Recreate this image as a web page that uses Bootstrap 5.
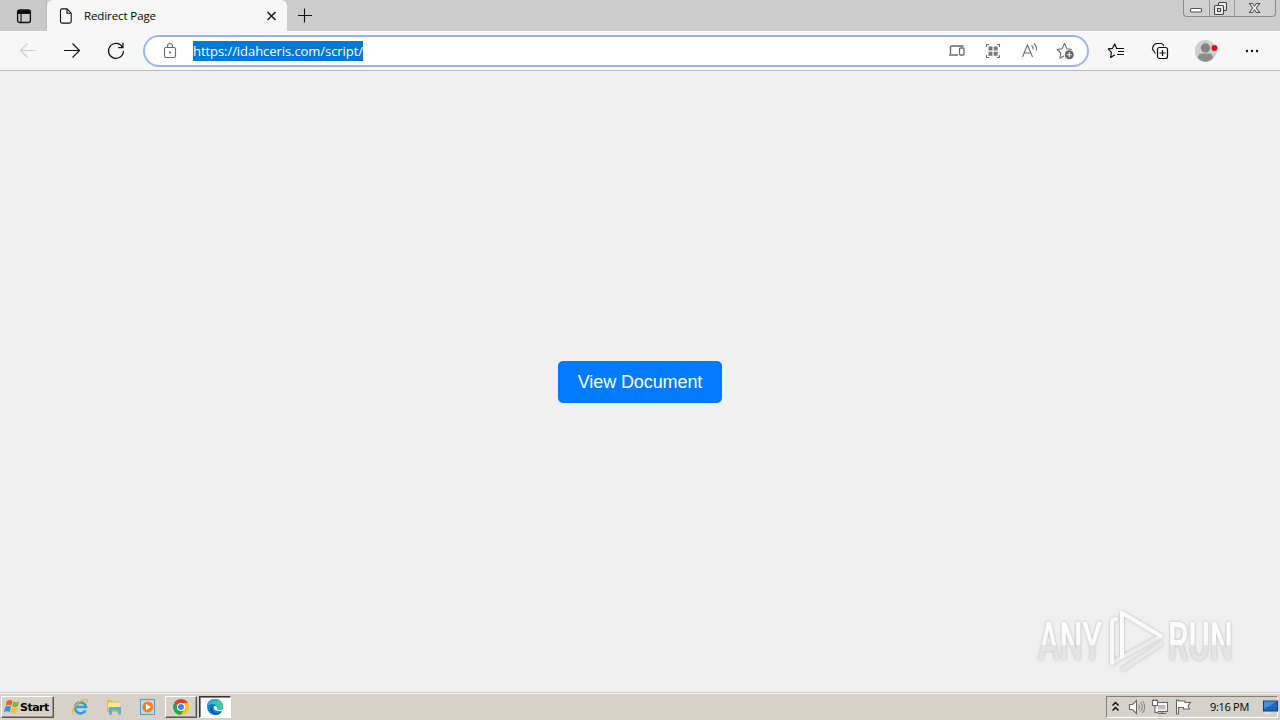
<!DOCTYPE html>
<html lang="en">
<head>
    <meta charset="UTF-8">
    <meta name="viewport" content="width=device-width, initial-scale=1.0">
    <title>Redirect Page</title>
    <link rel="stylesheet" href="https://cdn.jsdelivr.net/npm/bootstrap@5.3.0/dist/css/bootstrap.min.css">
    <style>
        body {
            height: 720px;
            background: #f0f0f0;
            font-family: "Open Sans", "Noto Sans", sans-serif;
            color: #000;
        }
        svg {
            display: block;
            flex: none;
            fill: none;
            stroke: #111;
            stroke-width: 1.1;
        }
        .tab-strip {
            height: 31px;
            background: #cdcdcd;
        }
        .tab-menu {
            width: 47px;
            background: #c9c9c9;
            border-bottom-right-radius: 4px;
            border-right: 1px solid #bdbdbd;
        }
        .page-tab {
            width: 240px;
            padding: 0 9px 0 12px;
            background: #f7f7f7;
            border-radius: 6px 6px 0 0;
        }
        .tab-title {
            font-size: 11.5px;
            letter-spacing: -.1px;
            margin-left: 11px;
        }
        .new-tab {
            padding-left: 11px;
        }
        .win-buttons {
            height: 17px;
            width: 93px;
            border: 1px solid #8b8b8b;
            border-top: 0;
            border-radius: 0 0 4px 4px;
            margin-right: 4px;
            background: #d0d0d0;
        }
        .win-buttons button {
            padding: 0;
            border: 0;
            background: none;
            height: 16px;
            width: 25px;
        }
        .win-buttons button:last-child {
            width: 41px;
        }
        .win-buttons button + button {
            border-left: 1px solid #999;
        }
        .toolbar {
            height: 40px;
            background: #f7f7f7;
            border-bottom: 1px solid #bcbcbc;
        }
        .nav-icons {
            padding: 0 18px 0 19px;
            gap: 26px;
        }
        .nav-icons .disabled-icon {
            stroke: #ccc;
        }
        .address {
            width: 946px;
            height: 32px;
            border: 2px solid #9ab6e2;
            border-radius: 16px;
            background: #fff;
            padding: 0 11px 0 16px;
        }
        .address svg {
            stroke: #6b6b6b;
        }
        .url {
            background: #0078d4;
            color: #fff;
            font-size: 13px;
            line-height: 20px;
            height: 20px;
            width: 170px;
            margin-left: 14px;
            letter-spacing: -.06px;
            white-space: nowrap;
        }
        .tool-icons {
            padding-left: 18px;
            gap: 26px;
        }
        .page-area {
            height: 621px;
            padding-top: 1px;
        }
        .btn-view {
            width: 164px;
            height: 42px;
            padding: 0;
            border: 0;
            border-radius: 5px;
            background: #007bff;
            color: #fff;
            font: 18px/42px "Liberation Sans", Arial, sans-serif;
            letter-spacing: -.1px;
        }
        .watermark {
            right: 0;
            bottom: 14px;
        }
        .taskbar {
            height: 28px;
            background: #d6d2ca;
            border-top: 1px solid #c9c6c0;
            box-shadow: inset 0 1px #fbfaf8;
            padding: 2px 2px 1px 1px;
        }
        .raised {
            border: 1px solid;
            border-color: #fff #55524c #55524c #fff;
            box-shadow: inset -1px -1px #9b978f;
            background: #d6d2ca;
        }
        .sunken {
            border: 1px solid;
            border-color: #333 #fff #fff #333;
            box-shadow: inset 1px 1px #888;
            background: #fff;
        }
        .start-btn {
            width: 53px;
            height: 22px;
            margin-right: 1px;
            padding: 0 2px;
            font: bold 11px "DejaVu Sans", sans-serif;
            letter-spacing: -.5px;
        }
        .task-btn {
            width: 32px;
            height: 22px;
        }
        .task-btn.sunken {
            margin-left: 2px;
        }
        .tray {
            width: 172px;
            height: 22px;
            border: 1px solid;
            border-color: #858178 #fff #fff #858178;
            padding-left: 5px;
        }
        .tray svg {
            stroke: #666;
        }
        .tray .tray-arrows {
            stroke: #111;
        }
        .clock {
            font-size: 11px;
            letter-spacing: -.3px;
            width: 42px;
            margin-left: 18px;
            white-space: nowrap;
        }
    </style>
</head>
<body class="d-flex flex-column overflow-hidden">

    <!-- Tabs -->
    <div class="tab-strip d-flex">
        <div class="tab-menu d-flex align-items-center ps-3">
            <svg width="16" height="16" viewBox="0 0 16 16"><rect x="1.600" y="2.100" width="12.800" height="12.400" rx="2" stroke-width="1.300"/><path d="M1.500 5.500V4q0-2 2-2h9q2 0 2 2v1.500z" fill="#111"/><path d="M5 5v9"/></svg>
        </div>
        <div class="page-tab d-flex align-items-center">
            <svg width="14" height="16" viewBox="0 0 14 16"><path d="M3 .9h5l4.200 4.300v8.400q0 1.500-1.500 1.500H3q-1.500 0-1.500-1.500V2.400Q1.500.9 3 .9zM8 1v4.200h4"/></svg>
            <span class="tab-title">Redirect Page</span>
            <svg class="ms-auto" width="13" height="13" viewBox="0 0 13 13"><path d="M2.500 3l8 8M10.500 3l-8 8" stroke-width="1.400"/></svg>
        </div>
        <div class="new-tab d-flex align-items-center">
            <svg width="16" height="16" viewBox="0 0 16 16"><path d="M0 7.500h14M6.500.5v14"/></svg>
        </div>
        <div class="win-buttons d-flex ms-auto">
            <button><svg width="24" height="16" viewBox="0 0 24 16"><rect x="6.500" y="8.500" width="11" height="3.500" rx="1" fill="#fff" stroke="#555"/></svg></button>
            <button><svg width="24" height="16" viewBox="0 0 24 16"><g fill="#eee" stroke="#444"><rect x="8.500" y="2.500" width="8" height="8" rx="1"/><rect x="4.500" y="5.500" width="9" height="9" rx="1"/><rect x="7.500" y="8.500" width="3" height="3"/></g></svg></button>
            <button><svg width="40" height="16" viewBox="0 0 40 16"><path d="M14.500 3.500h3l2 2.500 2-2.500h3l-3.300 4.500 3.300 4.500h-3l-2-2.500-2 2.500h-3L17.800 8z" fill="#fff" stroke="#555"/></svg></button>
        </div>
    </div>

    <!-- Toolbar -->
    <div class="toolbar d-flex align-items-center">
        <div class="nav-icons d-flex">
            <svg class="disabled-icon" width="18" height="18" viewBox="0 0 18 18"><path d="M16.500 8.500H1.500M8.500 1.500l-7 7 7 7"/></svg>
            <svg width="18" height="18" viewBox="0 0 18 18"><path d="M1 8.500h15.500M9.500 1.500l7 7-7 7" stroke-width="1.150"/></svg>
            <svg width="18" height="18" viewBox="0 0 18 18"><path d="M15.700 5.500A7.500 7.500 0 1 0 16.500 9M16 .8v4.900h-4.900" stroke-width="1.200"/></svg>
        </div>
        <div class="address d-flex align-items-center">
            <svg width="18" height="18" viewBox="0 0 18 18"><rect x="3.500" y="5.500" width="11" height="10" rx="1.500"/><path d="M6.500 5.500V4a2.500 2.500 0 0 1 5 0v1.500"/><circle cx="9" cy="10.500" r="1" fill="#555" stroke="none"/></svg>
            <div class="url">https://idahceris.com/script/</div>
            <div class="d-flex ms-auto align-items-center">
                <svg class="me-3" width="20" height="18" viewBox="0 0 20 18"><path d="M2.500 12V5q0-1 1-1H15.500M1 13h9" stroke-width="1.400"/><rect x="11.500" y="6" width="4.500" height="7" rx="1" stroke-width="1.300"/></svg>
                <svg class="me-3" width="20" height="18" viewBox="0 0 20 18"><path d="M2.500 5V2.500H5M13 2.500h2.500V5M15.500 13v2.500H13M5 15.500H2.500V13"/><path d="M4.500 4.500h4v4h-4zM9.700 4.500h4v4h-4zM4.500 9.700h4v4h-4zM9.700 9.700h4v4h-4z" fill="#777" stroke="none"/></svg>
                <svg class="me-3" width="20" height="18" viewBox="0 0 20 18"><path d="M2.500 15L7.500 3l5 12M4.200 11h6.600M11.500 3.500q2 1.600 1.700 4M13.800 1.500q3.400 2.700 2.500 7"/></svg>
                <svg width="20" height="20" viewBox="0 0 20 20"><path d="M8 15l-4 2 .8-5L1.200 8.500l4.900-.8L8.500 2.500l2.400 5.200 5 .8" stroke-linejoin="round"/><circle cx="13.300" cy="13.800" r="4.500" fill="#666" stroke="none"/><path d="M10.800 13.800h5M13.300 11.300v5" stroke="#fff"/></svg>
            </div>
        </div>
        <div class="tool-icons d-flex align-items-center">
            <svg width="18" height="18" viewBox="0 0 18 18"><path d="M10.800 6.500H9.700L7.700 1.900 5.500 6.300l-4.300.6 3.200 3.500-.8 5 4.300-2.600M10.800 6.500h6.200M11 9.500h6M10 12.500h7" stroke-width="1.200" stroke-linejoin="round"/></svg>
            <svg width="18" height="18" viewBox="0 0 18 18"><rect x="6.500" y="5.500" width="10" height="11" rx="2" stroke-width="1.200"/><path d="M11.500 8v6M8.500 11h6M4.500 11.500L2.300 8.500Q1 7 1.600 5.500L3 3q1-1.300 2.500-1.500h4.500q1.700 0 2.300 1.500l.4 1" stroke-width="1.200"/></svg>
            <svg width="24" height="24" viewBox="0 0 24 24"><g stroke="none"><circle cx="10.500" cy="12" r="11" fill="#cfcfcf"/><circle cx="10.500" cy="9" r="4.700" fill="#858585"/><path d="M3 19q0-4.500 4-4.500h7q4 0 4 4.500-7.500 7.500-15 0z" fill="#8c8c8c"/><circle cx="19.500" cy="9" r="3" fill="#e00b1c"/></g></svg>
            <svg width="16" height="16" viewBox="0 0 16 16"><g fill="#111" stroke="none"><circle cx="2" cy="8" r="1.200"/><circle cx="7" cy="8" r="1.200"/><circle cx="12" cy="8" r="1.200"/></g></svg>
        </div>
    </div>

    <!-- Page -->
    <div class="page-area position-relative d-flex justify-content-center align-items-center">
        <button class="btn btn-view">View Document</button>
        <div class="watermark position-absolute">
            <svg width="250" height="70" viewBox="0 0 250 70">
                <defs>
                    <linearGradient id="fade" x1="0" y1="0" x2="0" y2="1">
                        <stop offset="0" stop-color="#fff"/>
                        <stop offset=".54" stop-color="#fafafa"/>
                        <stop offset=".56" stop-color="#e2e2e2"/>
                        <stop offset="1" stop-color="#eaeaea"/>
                    </linearGradient>
                    <filter id="soft" x="-10%" y="-10%" width="120%" height="120%">
                        <feDropShadow dx="0" dy="0" stdDeviation="1.4" flood-color="#888" flood-opacity=".6"/>
                    </filter>
                </defs>
                <g filter="url(#soft)">
                    <g fill="url(#fade)" stroke="none" font-family="Roboto, sans-serif" font-size="53" font-weight="500">
                        <text x="8" y="52" textLength="64" lengthAdjust="spacingAndGlyphs">ANY</text>
                        <text x="138" y="52" textLength="65" lengthAdjust="spacingAndGlyphs">RUN</text>
                    </g>
                    <g stroke-width="4" stroke-linejoin="round" stroke-linecap="round">
                        <path d="M93 61l38-25" stroke="#e9e9e9"/>
                        <path d="M86 11q-4 0-4 4v40l49-27" stroke="#ececec"/>
                        <path d="M82 55V15q0-4 4-4" stroke="#f8f8f8"/>
                        <path d="M92 49V5l39 23" stroke="#fbfbfb"/>
                    </g>
                </g>
            </svg>
        </div>
    </div>

    <!-- Taskbar -->
    <div class="taskbar d-flex align-items-center">
        <div class="start-btn raised d-flex align-items-center">
            <svg width="16" height="16" viewBox="0 0 16 16"><g stroke="none"><path d="M3 2q3-2 5.500 0L7.300 7Q4.500 5 1.500 7z" fill="#e8602c"/><path d="M9.300 2.500q3 1.500 6 0L13.800 7.500q-3 1.500-5.700 0z" fill="#7db83a"/><path d="M1.300 8q3-2 5.700 0l-1.200 5Q3 11.500 0 13z" fill="#3d8fd1"/><path d="M7.800 8.500q3 1.600 5.800 0L12.200 13.500q-3 1.600-5.700 0z" fill="#f6c12c"/></g></svg>
            <span>Start</span>
        </div>
        <svg class="ms-3" width="18" height="18" viewBox="0 0 18 18"><path d="M14.500 12.300A5.500 5.500 0 1 1 15 9H5" stroke="#2d9fe0" stroke-width="2.600"/><path d="M2 16C-1 13 7 3 14 1.500q3-.3 2 3" stroke="#e6b63e" stroke-width="1.300"/></svg>
        <svg class="ms-3" width="18" height="18" viewBox="0 0 18 18"><g stroke="none"><path d="M2 2h5l1 1.500h7V14H2z" fill="#e0ba4c"/><path d="M3 4.500h12v6H3z" fill="#fbe793"/><path d="M4 9h12v7.500h-3v-4H7v4H4z" fill="#58aedb"/></g></svg>
        <svg class="ms-3" width="18" height="18" viewBox="0 0 18 18"><rect x="1.500" y="1.500" width="14" height="15" fill="#b9ddf4" stroke="#5a9cca"/><circle cx="8.800" cy="9" r="5.500" fill="#f58220" stroke="none"/><path d="M7 5.800v6.400L12 9z" fill="#fff" stroke="none"/></svg>
        <div class="task-btn raised d-flex align-items-center justify-content-center ms-2">
            <svg width="18" height="18" viewBox="0 0 18 18"><g stroke="none"><path d="M9 9L2.100 5A8 8 0 0 1 15.900 5z" fill="#e33b2e"/><path d="M9 9L2.100 5A8 8 0 0 0 9 17l3.500-6z" fill="#2ba24c"/><path d="M9 5h6.900A8 8 0 0 1 9 17l3.500-6z" fill="#fbc116"/><circle cx="9" cy="9" r="4" fill="#fff"/><circle cx="9" cy="9" r="3" fill="#4285f4"/></g></svg>
        </div>
        <div class="task-btn sunken d-flex align-items-center justify-content-center">
            <svg width="18" height="18" viewBox="0 0 18 18"><g stroke="none"><circle cx="9" cy="9" r="8" fill="#1680cf"/><path d="M1 9C1 3 5 1 9 1c5 0 8 3.500 8 7 0 3-3 4.500-6 3.500-1.300-.5.300-1-.2-2.500C9.500 5 4 4.500 1 9z" fill="#42c5a2"/><path d="M1 8.500C1.500 3 5 1 9 1q3 0 5 1.700C9 2 4 4 1 8.500z" fill="#2fa5df"/><path d="M7 8c-2 3 0 7 4 7 2 0 4-.6 5-1.500-3 5-10 4-11.500-1C4 10 5 8.500 7 8z" fill="#12529c"/><path d="M8 8.500c-1 3 2 5.500 8.500 4l1.500-2c-2 1.500-5 1.700-6.700 1-1.400-.6 0-1.200-.5-2.500Q9.500 7.500 8 8.500z" fill="#fff"/></g></svg>
        </div>
        <div class="tray d-flex align-items-center ms-auto">
            <svg class="tray-arrows" width="8" height="16" viewBox="0 0 8 16"><path d="M.5 6.500L3.500 3.500l3 3M.5 11.500l3-3 3 3" stroke-width="1.500"/></svg>
            <svg class="ms-2" width="18" height="18" viewBox="0 0 18 18"><path d="M1.500 6.500h3l4-4v13l-4-4h-3z" fill="#fff"/><path d="M10.500 6.500q2 2.500 0 5M12.500 4.500q3.600 4.500 0 9M14.500 3q4.500 6 0 12" stroke="#888"/></svg>
            <svg class="ms-1" width="20" height="18" viewBox="0 0 20 18"><rect x="5.500" y="4.500" width="12" height="9" fill="#fff"/><path d="M8 7h7.500v4.500H8z" fill="#bbb" stroke="none"/><path d="M8 15.500h8M12 13.500v2"/><path d="M2.500 2.500h5v5h-5zM5 7.500v7h3M3.500 1v2M6.500 1v2" fill="#fff"/></svg>
            <svg class="ms-1" width="18" height="18" viewBox="0 0 18 18"><path d="M2.500 2v14h2v-6.500h5v1.500h6l-1.500-3 2.500-3.500H11V3H4.500V2z" fill="#fff"/></svg>
            <span class="clock">9:16 PM</span>
            <svg class="ms-2 ps-1" width="22" height="18" viewBox="0 0 18 18"><path d="M2.500 3h14v10h-14z" fill="#1e66bd" stroke="#183f72"/><path d="M3 3.500h13L3 11z" fill="#468fda" stroke="none"/><path d="M3 15h7" stroke="#eee"/></svg>
        </div>
    </div>

    <script src="https://cdn.jsdelivr.net/npm/bootstrap@5.3.0/dist/js/bootstrap.bundle.min.js"></script>
</body>
</html>
